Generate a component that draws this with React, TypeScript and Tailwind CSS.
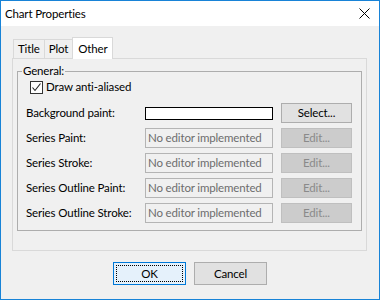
import React from 'react';

const font = { fontFamily: 'Lato, "Segoe UI", sans-serif' };

const rows = [
  'Series Paint:',
  'Series Stroke:',
  'Series Outline Paint:',
  'Series Outline Stroke:',
];

function Tab({ label, active }: { label: string; active?: boolean }) {
  if (active) {
    return (
      <div className="-mb-px -ml-px flex h-[22px] items-center border border-b-0 border-[#d9d9d9] bg-[#ffffff] px-[5px] text-[11.5px] text-black">
        {label}
      </div>
    );
  }
  return (
    <div className="-ml-px mt-[2px] flex h-[19px] items-center border border-b-0 border-[#d9d9d9] bg-[#f0f0f0] px-[4px] text-[11.5px] text-black first:ml-0">
      {label}
    </div>
  );
}

export default function App() {
  return (
    <div className="h-[301px] w-[380px] whitespace-nowrap bg-white tracking-[-0.15px]" style={font}>
      <div className="flex h-[300px] w-[380px] flex-col border border-[#1883d7] bg-[#f0f0f0]">
        <div className="flex h-[25px] shrink-0 items-center justify-between bg-white pl-[4px] pr-[9px]">
          <span className="text-[11.5px] text-black">Chart Properties</span>
          <svg width="11" height="11" viewBox="0 0 11 11">
            <path d="M0.5 0.5 L10.5 10.5 M10.5 0.5 L0.5 10.5" stroke="#000" strokeWidth="1" />
          </svg>
        </div>

        <div className="pl-[11px] pr-[12px] pt-[11px]">
          <div className="flex items-end pl-[1px]">
            <Tab label="Title" />
            <Tab label="Plot" />
            <Tab label="Other" active />
          </div>
          <div className="h-[193px] border border-[#d9d9d9] bg-[#f0f0f0] px-[4px] pt-[4px]">
            <fieldset className="h-[168px] border border-[#adadad] px-[8px] pb-[6px]">
              <legend className="-ml-[4px] px-[1px] text-[11.5px] leading-[16px] text-black">General:</legend>
              <label className="ml-[4px] flex h-[16px] items-center gap-[3px] text-[11.5px] text-black">
                <span className="flex h-[13px] w-[13px] items-center justify-center border border-[#333333] bg-white">
                  <svg width="11" height="11" viewBox="0 0 11 11">
                    <path d="M1.5 5.5 L4 8.5 L9.5 1.5" fill="none" stroke="#222" strokeWidth="1.1" />
                  </svg>
                </span>
                Draw anti-aliased
              </label>

              <div className="mt-[8px] flex flex-col gap-[5px]">
                <div className="flex h-[20px] items-center">
                  <span className="w-[119px] text-[11.5px] text-black">Background paint:</span>
                  <div className="h-[13px] w-[128px] border border-black bg-white" />
                  <button className="ml-[8px] h-[20px] w-[71px] border border-[#adadad] bg-[#e1e1e1] text-[11.5px] text-black">
                    Select...
                  </button>
                </div>
                {rows.map((r) => (
                  <div key={r} className="flex h-[20px] items-center">
                    <span className="w-[119px] text-[11.5px] text-black">{r}</span>
                    <div className="flex h-[20px] w-[128px] items-center overflow-hidden border border-[#b4b4b4] bg-[#f0f0f0] pl-[2px] text-[11.5px] text-[#6d6d6d]">
                      No editor implemented
                    </div>
                    <button className="ml-[8px] h-[20px] w-[71px] border border-[#bfbfbf] bg-[#cccccc] text-[11.5px] text-[#8a8a8a]">
                      Edit...
                    </button>
                  </div>
                ))}
              </div>
            </fieldset>
          </div>
        </div>

        <div className="mt-[11px] flex justify-center gap-[8px]">
          <button className="h-[23px] w-[73px] border border-[#0078d7] bg-[#e5f1fb] p-[2px] text-[11.5px] text-black">
            <div className="flex h-full w-full items-center justify-center border border-dotted border-black">OK</div>
          </button>
          <button className="h-[23px] w-[73px] border border-[#adadad] bg-[#e1e1e1] text-[11.5px] text-black">
            Cancel
          </button>
        </div>
      </div>
    </div>
  );
}
